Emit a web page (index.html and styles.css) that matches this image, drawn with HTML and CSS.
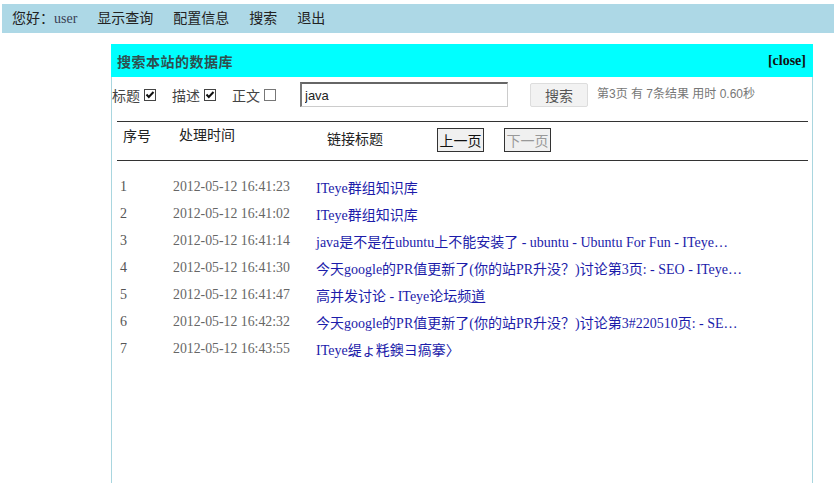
FILE: index.html
```html
<!DOCTYPE html>
<html lang="zh-CN">
<head>
<meta charset="utf-8">
<title>搜索本站的数据库</title>
<link rel="stylesheet" href="styles.css">
</head>
<body>
<div class="topbar">
  <span class="greet">您好：<span class="user">user</span></span>
  <a class="nav">显示查询</a>
  <a class="nav">配置信息</a>
  <a class="nav">搜索</a>
  <a class="nav">退出</a>
</div>

<div class="dialog">
  <div class="dlg-head">
    <span class="dlg-title">搜索本站的数据库</span>
    <a class="close">[close]</a>
  </div>

  <div class="search-row">
    <label class="opt">标题<svg class="cb" width="12" height="12" viewBox="0 0 12 12"><rect x="0.5" y="0.5" width="11" height="11" fill="#fff" stroke="#444"/><path d="M2.5 5.5 L4.8 8 L9.5 3" fill="none" stroke="#111" stroke-width="2"/></svg></label>
    <label class="opt">描述<svg class="cb" width="12" height="12" viewBox="0 0 12 12"><rect x="0.5" y="0.5" width="11" height="11" fill="#fff" stroke="#444"/><path d="M2.5 5.5 L4.8 8 L9.5 3" fill="none" stroke="#111" stroke-width="2"/></svg></label>
    <label class="opt">正文<svg class="cb" width="12" height="12" viewBox="0 0 12 12"><rect x="0.5" y="0.5" width="11" height="11" fill="#fff" stroke="#777"/></svg></label>
    <input class="q" type="text" value="java">
    <button class="btn-search">搜索</button>
    <span class="stats">第3页 有 7条结果 用时 0.60秒</span>
  </div>

  <div class="results">
    <div class="col-head">
      <span class="h-num">序号</span>
      <span class="h-time">处理时间</span>
      <span class="h-link">链接标题</span>
      <button class="pg">上一页</button>
      <button class="pg pg-off">下一页</button>
    </div>
    <ul class="rows">
      <li class="row"><span class="c-num">1</span><span class="c-time">2012-05-12 16:41:23</span><a class="c-title">ITeye群组知识库</a></li>
      <li class="row"><span class="c-num">2</span><span class="c-time">2012-05-12 16:41:02</span><a class="c-title">ITeye群组知识库</a></li>
      <li class="row"><span class="c-num">3</span><span class="c-time">2012-05-12 16:41:14</span><a class="c-title">java是不是在ubuntu上不能安装了 - ubuntu - Ubuntu For Fun - ITeye…</a></li>
      <li class="row"><span class="c-num">4</span><span class="c-time">2012-05-12 16:41:30</span><a class="c-title">今天google的PR值更新了(你的站PR升没？)讨论第3页: - SEO - ITeye…</a></li>
      <li class="row"><span class="c-num">5</span><span class="c-time">2012-05-12 16:41:47</span><a class="c-title">高并发讨论 - ITeye论坛频<span class="hover">道</span></a></li>
      <li class="row"><span class="c-num">6</span><span class="c-time">2012-05-12 16:42:32</span><a class="c-title">今天google的PR值更新了(你的站PR升没？)讨论第3#220510页: - SE…</a></li>
      <li class="row"><span class="c-num">7</span><span class="c-time">2012-05-12 16:43:55</span><a class="c-title">ITeye缇ょ粍鐭ヨ瘑搴〉</a></li>
    </ul>
  </div>
</div>
</body>
</html>
```

FILE: styles.css
```css
html, body {
  margin: 0;
  padding: 0;
  background: #fff;
}

body {
  font-family: "Liberation Serif", "Noto Sans CJK SC", serif;
  color: #333;
  overflow: hidden;
}

.topbar {
  margin: 4px 0 0 2px;
  height: 29px;
  background: #add8e6;
  display: flex;
  align-items: center;
  padding-left: 10px;
  font-size: 14px;
  line-height: 16px;
  color: #222;
  gap: 20px;
}

.greet { color: #222; }
.user { color: #3a3f55; }
.nav { color: #222; text-decoration: none; }

.dialog {
  margin: 11px 0 0 111px;
  width: 700px;
  height: 460px;
  border: 1px solid #a9d6df;
  border-top: none;
}

.dlg-head {
  margin: 0 -1px;
  height: 33px;
  background: #00ffff;
  display: flex;
  align-items: center;
  justify-content: space-between;
  padding: 0 7px 0 6px;
}

.dlg-title {
  font-family: "Noto Sans CJK SC", sans-serif;
  font-weight: bold;
  font-size: 14px;
  color: #2f4f4f;
  letter-spacing: 0.5px;
}

.close {
  font-family: "Liberation Serif", serif;
  font-weight: bold;
  font-size: 14px;
  color: #111;
}

.search-row {
  margin-top: 5px;
  height: 25px;
  display: flex;
  align-items: center;
  font-size: 14px;
  line-height: 16px;
}

.opt {
  display: flex;
  align-items: center;
  color: #444;
  font-family: "Noto Sans CJK SC", sans-serif;
}

.opt .cb {
  margin-left: 4px;
  margin-top: 1px;
}

.opt + .opt { margin-left: 16px; }

.q {
  margin-left: 24px;
  width: 208px;
  height: 25px;
  box-sizing: border-box;
  border-top: 2px solid #666;
  border-left: 2px solid #777;
  border-right: 1px solid #ccc;
  border-bottom: 1px solid #ccc;
  padding: 0 0 0 3px;
  font-family: "Liberation Sans", sans-serif;
  font-size: 13px;
  color: #222;
  outline: none;
}

.btn-search {
  margin-left: 22px;
  width: 58px;
  height: 24px;
  border: 1px solid #ddd;
  border-radius: 2px;
  background: #f2f2f2;
  color: #555;
  font-family: "Noto Sans CJK SC", sans-serif;
  font-size: 14px;
  padding: 0;
}

.stats {
  margin-left: 9px;
  font-family: "Liberation Sans", "Noto Sans CJK SC", sans-serif;
  font-size: 12px;
  color: #777;
  margin-top: -2px;
}

.results {
  margin: 14px 4px 0 5px;
  border-top: 1px solid #333;
}

.col-head {
  height: 38px;
  display: flex;
  align-items: flex-start;
  border-bottom: 1px solid #333;
  font-family: "Noto Sans CJK SC", sans-serif;
  font-size: 14px;
  line-height: 16px;
  color: #222;
}

.h-num { width: 56px; padding: 5px 0 0 6px; }
.h-time { width: 148px; padding-top: 4px; }
.h-link { width: 110px; padding-top: 8px; }

.pg {
  margin-top: 6px;
  width: 47px;
  height: 24px;
  border: 1px solid #333;
  background: #f0f0f0;
  font-family: "Noto Sans CJK SC", sans-serif;
  font-size: 14px;
  color: #111;
  padding: 0;
}

.pg-off {
  margin-left: 20px;
  color: #999;
}

.rows {
  list-style: none;
  margin: 12px 0 0 0;
  padding: 0;
}

.row {
  height: 27px;
  display: flex;
  align-items: center;
  white-space: nowrap;
}

.c-num {
  width: 56px;
  padding-left: 3px;
  box-sizing: border-box;
  font-size: 14px;
  color: #555;
}

.c-time {
  width: 143px;
  font-size: 13.8px;
  color: #666;
}

.c-title {
  font-family: "Liberation Serif", "Noto Sans CJK SC", serif;
  font-size: 14px;
  color: #1c1caa;
  text-decoration: none;
}

.c-title .hover { text-decoration: underline; }
```
